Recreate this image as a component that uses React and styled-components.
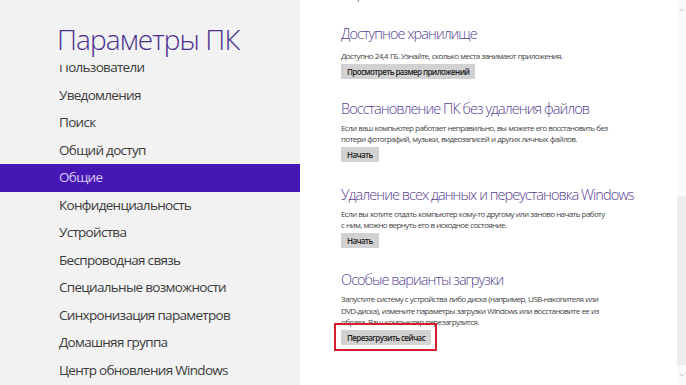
import React from 'react';
import styled, { createGlobalStyle } from 'styled-components';

const GlobalStyle = createGlobalStyle`
  html, body {
    margin: 0;
    padding: 0;
    background: #ffffff;
  }
  body {
    font-family: 'Open Sans', 'Noto Sans', sans-serif;
  }
`;

const Screen = styled.div`
  width: 686px;
  height: 385px;
  display: flex;
  overflow: hidden;
`;

const Sidebar = styled.div`
  width: 300px;
  flex-shrink: 0;
  background: #f2f2f2;
  display: flex;
  flex-direction: column;
`;

const PageTitle = styled.h1`
  margin: 0;
  height: 65px;
  box-sizing: border-box;
  padding: 21px 0 0 57px;
  font-size: 28px;
  font-weight: 300;
  line-height: 36px;
  color: #4a2f8f;
  letter-spacing: -0.9px;
`;

const MenuViewport = styled.div`
  flex: 1;
  overflow: hidden;
`;

const MenuList = styled.ul`
  list-style: none;
  margin: -11px 0 0;
  padding: 0;
`;

const MenuItem = styled.li`
  height: 27.5px;
  line-height: 27.5px;
  padding-left: 59px;
  font-size: 13.5px;
  letter-spacing: -0.7px;
  color: ${(p) => (p.$active ? '#d8cdf4' : '#3b3b3b')};
  background: ${(p) => (p.$active ? '#4617b4' : 'transparent')};
  white-space: nowrap;
`;

const Content = styled.div`
  flex: 1;
  overflow: hidden;
  padding-left: 41px;
`;

const TopLink = styled.div`
  margin-top: -9px;
  font-size: 8px;
  line-height: 12px;
  letter-spacing: -0.4px;
  color: #5a3e93;
`;

const Section = styled.section`
  display: flex;
  flex-direction: column;
  align-items: flex-start;
  margin-top: ${(p) => p.$gap}px;
`;

const Heading = styled.h2`
  margin: 0;
  font-size: 14.5px;
  font-weight: 300;
  line-height: 22px;
  letter-spacing: -0.95px;
  color: #57408f;
  white-space: nowrap;
`;

const Text = styled.p`
  margin: ${(p) => p.$top}px 0 0;
  width: 268px;
  font-size: 8px;
  line-height: 11.6px;
  letter-spacing: -0.6px;
  word-spacing: 0.3px;
  color: #454545;
`;

const ButtonWrap = styled.div`
  position: relative;
  margin-top: 2px;

  ${(p) =>
    p.$marked &&
    `
    &::after {
      content: '';
      position: absolute;
      left: -7px;
      right: -6px;
      top: -7px;
      bottom: -6px;
      border: 2px solid #d4202c;
    }
  `}
`;

const Button = styled.button`
  display: block;
  height: 15px;
  padding: 0 6px;
  border: none;
  background: #d2d2d2;
  font-family: 'Open Sans', 'Noto Sans', sans-serif;
  font-size: 8px;
  font-weight: 600;
  letter-spacing: -0.6px;
  color: #1e1e1e;
  line-height: 15px;
  white-space: nowrap;
`;

const Scrollbar = styled.div`
  width: 9px;
  flex-shrink: 0;
  background: #fafafa;
  display: flex;
  flex-direction: column;
  align-items: center;
`;

const Arrow = styled.div`
  height: 20px;
  display: flex;
  align-items: center;
  justify-content: center;
`;

const TrackSpace = styled.div`
  height: ${(p) => p.$h}px;
`;

const Thumb = styled.div`
  width: 9px;
  flex: 1;
  background: #ececec;
`;

const Chevron = ({ up }) => (
  <svg width="6" height="4" viewBox="0 0 6 4">
    <path
      d={up ? 'M0.5 3.5 L3 1 L5.5 3.5' : 'M0.5 0.5 L3 3 L5.5 0.5'}
      fill="none"
      stroke="#c4c4c4"
      strokeWidth="1"
    />
  </svg>
);

const menu = [
  'Пользователи',
  'Уведомления',
  'Поиск',
  'Общий доступ',
  'Общие',
  'Конфиденциальность',
  'Устройства',
  'Беспроводная связь',
  'Специальные возможности',
  'Синхронизация параметров',
  'Домашняя группа',
  'Центр обновления Windows',
];

const sections = [
  {
    title: 'Доступное хранилище',
    text: 'Доступно 24,4 ГБ. Узнайте, сколько места занимают приложения.',
    button: 'Просмотреть размер приложений',
    gap: 20,
    textTop: 5,
  },
  {
    title: 'Восстановление ПК без удаления файлов',
    text: 'Если ваш компьютер работает неправильно, вы можете его восстановить без потери фотографий, музыки, видеозаписей и других личных файлов.',
    button: 'Начать',
    gap: 19,
    textTop: 2,
  },
  {
    title: 'Удаление всех данных и переустановка Windows',
    text: 'Если вы хотите отдать компьютер кому-то другому или заново начать работу с ним, можно вернуть его в исходное состояние.',
    button: 'Начать',
    gap: 22,
    textTop: 2,
  },
  {
    title: 'Особые варианты загрузки',
    text: 'Запустите систему с устройства либо диска (например, USB-накопителя или DVD-диска), измените параметры загрузки Windows или восстановите ее из образа. Ваш компьютер перезагрузится.',
    button: 'Перезагрузить сейчас',
    gap: 21,
    textTop: 2,
    marked: true,
  },
];

export default function App() {
  return (
    <>
      <GlobalStyle />
      <Screen>
        <Sidebar>
          <PageTitle>Параметры ПК</PageTitle>
          <MenuViewport>
            <MenuList>
              {menu.map((item) => (
                <MenuItem key={item} $active={item === 'Общие'}>
                  {item}
                </MenuItem>
              ))}
            </MenuList>
          </MenuViewport>
        </Sidebar>
        <Content>
          <TopLink>Настройки языка</TopLink>
          {sections.map((s) => (
            <Section key={s.title} $gap={s.gap}>
              <Heading>{s.title}</Heading>
              <Text $top={s.textTop}>{s.text}</Text>
              <ButtonWrap $marked={s.marked}>
                <Button>{s.button}</Button>
              </ButtonWrap>
            </Section>
          ))}
        </Content>
        <Scrollbar>
          <Arrow>
            <Chevron up />
          </Arrow>
          <TrackSpace $h={176} />
          <Thumb />
          <Arrow>
            <Chevron />
          </Arrow>
        </Scrollbar>
      </Screen>
    </>
  );
}
